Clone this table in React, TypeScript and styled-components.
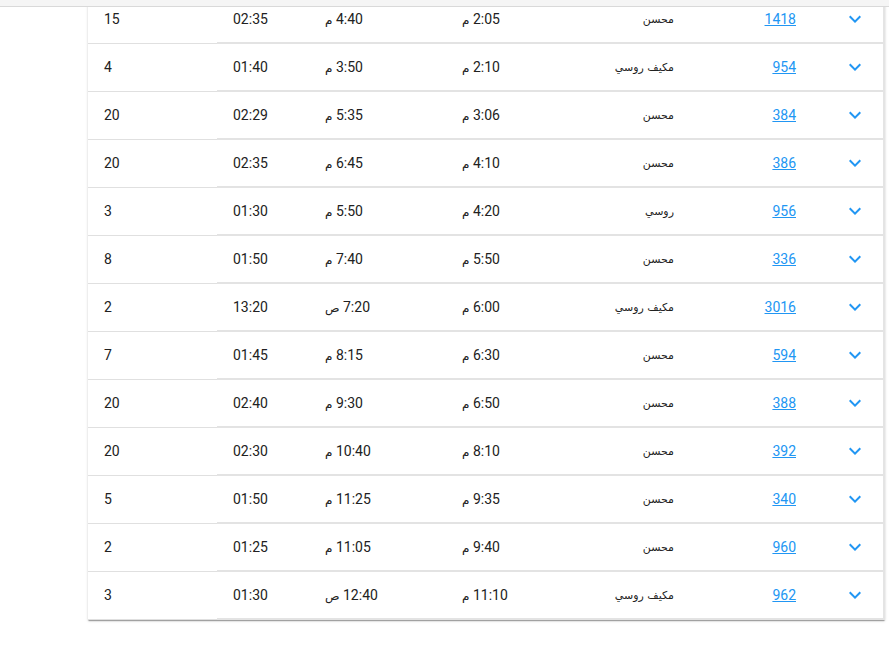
import React from "react";
import styled, { createGlobalStyle } from "styled-components";

const Global = createGlobalStyle`
  html, body { margin: 0; padding: 0; background: #fff; }
  body { font-family: Roboto, "DejaVu Sans", sans-serif; }
`;

type Row = {
  no: string;
  type: string;
  dep: string;
  arr: string;
  dur: string;
  count: string;
};

const rows: Row[] = [
  { no: "1418", type: "محسن", dep: "2:05 م", arr: "4:40 م", dur: "02:35", count: "15" },
  { no: "954", type: "مكيف روسي", dep: "2:10 م", arr: "3:50 م", dur: "01:40", count: "4" },
  { no: "384", type: "محسن", dep: "3:06 م", arr: "5:35 م", dur: "02:29", count: "20" },
  { no: "386", type: "محسن", dep: "4:10 م", arr: "6:45 م", dur: "02:35", count: "20" },
  { no: "956", type: "روسي", dep: "4:20 م", arr: "5:50 م", dur: "01:30", count: "3" },
  { no: "336", type: "محسن", dep: "5:50 م", arr: "7:40 م", dur: "01:50", count: "8" },
  { no: "3016", type: "مكيف روسي", dep: "6:00 م", arr: "7:20 ص", dur: "13:20", count: "2" },
  { no: "594", type: "محسن", dep: "6:30 م", arr: "8:15 م", dur: "01:45", count: "7" },
  { no: "388", type: "محسن", dep: "6:50 م", arr: "9:30 م", dur: "02:40", count: "20" },
  { no: "392", type: "محسن", dep: "8:10 م", arr: "10:40 م", dur: "02:30", count: "20" },
  { no: "340", type: "محسن", dep: "9:35 م", arr: "11:25 م", dur: "01:50", count: "5" },
  { no: "960", type: "محسن", dep: "9:40 م", arr: "11:05 م", dur: "01:25", count: "2" },
  { no: "962", type: "مكيف روسي", dep: "11:10 م", arr: "12:40 ص", dur: "01:30", count: "3" },
];

const Page = styled.div`
  padding-left: 88px;
  padding-bottom: 40px;
`;

const TopStrip = styled.div`
  position: fixed;
  top: 0;
  left: 0;
  right: 0;
  height: 6px;
  background: #f5f5f5;
  border-bottom: 1px solid #d9d9d9;
  z-index: 2;
`;

const Card = styled.div`
  width: 797px;
  margin-top: -4px;
  background: #fff;
  box-shadow: 0 2px 1px -1px rgba(0, 0, 0, 0.2), 0 1px 1px 0 rgba(0, 0, 0, 0.14),
    0 1px 3px 0 rgba(0, 0, 0, 0.12);
  border-right: 2px solid #e4e4e4;
  box-sizing: border-box;
`;

const Table = styled.div`
  direction: rtl;
`;

const TableRow = styled.div`
  display: grid;
  grid-template-columns: 71px 122px 130px 114px 137px 92px 129px;
  height: 48px;
  font-size: 14px;
  color: #212121;
`;

const Cell = styled.div<{ $align?: "left" | "right"; $thin?: boolean }>`
  display: flex;
  align-items: center;
  justify-content: ${(p) => (p.$align === "left" ? "flex-end" : "flex-start")};
  padding: 0 16px;
  box-sizing: border-box;
  border-bottom: ${(p) => (p.$thin ? "1px solid #e0e0e0" : "2px solid #e3e3e3")};
  padding-bottom: ${(p) => (p.$thin ? "1px" : "0")};
  white-space: nowrap;
`;

const ArabicText = styled.span<{ $size: number }>`
  font-family: "DejaVu Sans", sans-serif;
  font-size: ${(p) => p.$size}px;
`;

const TrainLink = styled.a`
  color: #2196f3;
  text-decoration: underline;
  cursor: pointer;
`;

const ExpandButton = styled.span`
  display: inline-flex;
  width: 24px;
  height: 24px;
`;

const Chevron = () => (
  <svg width="24" height="24" viewBox="0 0 24 24" aria-hidden="true">
    <path d="M16.59 8.59L12 13.17 7.41 8.59 6 10l6 6 6-6z" fill="#2196f3" />
  </svg>
);

const Time = ({ value }: { value: string }) => {
  const [clock, suffix] = value.split(" ");
  return (
    <span>
      {clock} <ArabicText $size={12}>{suffix}</ArabicText>
    </span>
  );
};

export default function App() {
  return (
    <>
      <Global />
      <TopStrip />
      <Page>
        <Card>
          <Table>
            {rows.map((r) => (
              <TableRow key={r.no}>
                <Cell>
                  <ExpandButton>
                    <Chevron />
                  </ExpandButton>
                </Cell>
                <Cell>
                  <TrainLink>{r.no}</TrainLink>
                </Cell>
                <Cell>
                  <ArabicText $size={11}>{r.type}</ArabicText>
                </Cell>
                <Cell $align="left">
                  <Time value={r.dep} />
                </Cell>
                <Cell $align="left">
                  <Time value={r.arr} />
                </Cell>
                <Cell $align="left">{r.dur}</Cell>
                <Cell $align="left" $thin>
                  {r.count}
                </Cell>
              </TableRow>
            ))}
          </Table>
        </Card>
      </Page>
    </>
  );
}
